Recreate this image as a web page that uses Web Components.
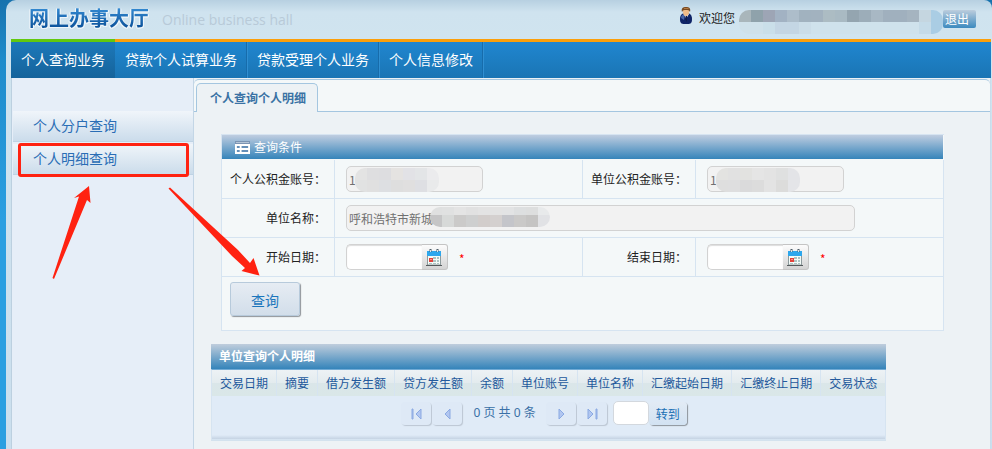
<!DOCTYPE html>
<html lang="zh-CN">
<head>
<meta charset="utf-8">
<title>网上办事大厅</title>
<style>
  body {
    margin: 0;
    font: 12px/16px "Noto Sans CJK SC", sans-serif;
    color: #222;
  }
</style>
</head>
<body>
<app-shell>
  <site-header slot="header"></site-header>
  <main-nav slot="nav"></main-nav>
  <side-menu slot="side"></side-menu>
  <tab-panel label="个人查询个人明细">
    <query-panel></query-panel>
    <detail-grid></detail-grid>
  </tab-panel>
</app-shell>
<guide-arrows></guide-arrows>

<script>
// Base class: renders the template once into an open shadow root
class BaseElement extends HTMLElement {
    constructor() {
        super();
        this.attachShadow({ mode: 'open' });
    }
    connectedCallback() {
        this.shadowRoot.innerHTML = `<style>* { box-sizing: border-box; }</style>` + this.template();
    }
}

// ============================================================================
// Layout
// ============================================================================
class AppShell extends BaseElement {
    template() {
        return `
      <style>
        :host {
          display: block;
          min-height: 100vh;
          box-sizing: border-box;
          padding-left: 6px;
          background: linear-gradient(#1872ad, #1e8ccb 60px, #2a9fe1 220px, #2a9fe1);
        }
        .page {
          display: flex;
          flex-direction: column;
          min-height: 100vh;
          padding: 0 1px 0 5px;
          border-radius: 10px 8px 0 0;
          background: linear-gradient(#b7d0e1, #cfe3ef 12px, #d0e4ef 40px, #cbdfee);
        }
        .body {
          display: grid;
          grid-template-columns: 183px 1fr;
          flex: 1;
          background: #edf2f5;
        }
      </style>
      <div class="page">
        <slot name="header"></slot>
        <slot name="nav"></slot>
        <div class="body">
          <slot name="side"></slot>
          <slot></slot>
        </div>
      </div>
    `;
    }
}

class SiteHeader extends BaseElement {
    template() {
        return `
      <style>
        :host { display: flex; align-items: flex-start; height: 39px; padding: 0 15px 0 18px; box-sizing: border-box; }
        h1 {
          margin: 0;
          font-size: 20px;
          line-height: 36px;
          font-weight: bold;
          background: linear-gradient(#3287cf 25%, #0d549c 75%);
          -webkit-background-clip: text;
          background-clip: text;
          color: transparent;
          filter: drop-shadow(1px 0 0 #eef5f9) drop-shadow(-1px 0 0 #eef5f9) drop-shadow(0 1px 0 #eef5f9);
        }
        .sub { margin: 10px 0 0 13px; font: 14px/20px "Open Sans", sans-serif; color: #b8cad8; }
        .user { display: flex; align-items: center; margin-left: auto; height: 38px; }
        .user svg { margin: 0 6px 8px 0; }
        .user span { padding-bottom: 2px; }
        masked-text { margin: 6px 0 0 4px; }
        button {
          height: 18px;
          padding: 0 7px 0 2px;
          border: 0;
          border-radius: 2px;
          background: linear-gradient(#bccddd, #3c8abf);
          color: #fff;
          font: 12px/18px "Noto Sans CJK SC", sans-serif;
        }
      </style>
      <h1>网上办事大厅</h1>
      <span class="sub">Online business hall</span>
      <div class="user">
        <svg width="14" height="17" viewBox="0 0 14 17">
          <path d="M1 12c0-4 2-6 6-6s6 2 6 6c0 5-2 5-6 5s-6 0-6-5z" fill="#0f2467"/>
          <path d="M2 11c0-3 2-4 4-4l-1 6z" fill="#4765a8"/>
          <path d="M5 7l2 5 3-5z" fill="#e8edf5"/>
          <path d="M7 8l-1 4 2 3V9z" fill="#101c4a"/>
          <ellipse cx="7" cy="5" rx="3" ry="4" fill="#f0bc88"/>
          <path d="M3 5C2 1 4 0 7 0s5 1 4 5c-1-2-2-2-4-2S4 3 3 5z" fill="#7a4a20"/>
          <path d="M5 1h4l1 1H5z" fill="#b47a43"/>
        </svg>
        <span>欢迎您</span>
        <masked-text cells="#a9b6bb #8fa2ab #9da5b5 #a2b2c3 #adbdca #a1b2bf #a2b2bf #acbcc3 #a9bac3 #94a5b0 #9cadb9 #a8b8c4 #a0b0be #a0b0be #a5b4c0 #c5d6e0 #aacde4"
          under="#cfe1ea #cfe1ea #cadfe9 #c4d6e4 #c4d6e4 #cbdde8 #cfe2ec #cfe2ec #cfe2ec #cfe2ec #cfe2ec #cfe2ec #cfe2ec #cfe2ec #cfe2ec #c5dbe8 #aacde4"></masked-text>
        <button type="button">退出</button>
      </div>
    `;
    }
}

class MainNav extends BaseElement {
    template() {
        return `
      <style>
        :host { display: block; background: linear-gradient(#2086d0, #1a75b4); border-top: 3px solid #fb9f0b; }
        nav { display: flex; height: 39px; margin-top: -3px; padding-top: 3px; }
        a {
          padding: 0 9px 0 10px;
          border-right: 1px solid #176cab;
          box-shadow: 1px 0 0 #2f8fd2;
          color: #fff;
          font-size: 14px;
          line-height: 34px;
          text-decoration: none;
        }
        a.active {
          margin-top: -3px;
          padding: 0 10px;
          border-right: 0;
          border-top: 3px solid #62c80e;
          background: linear-gradient(#1d79ba, #15639b);
          box-shadow: none;
        }
      </style>
      <nav>
        <a class="active" href="#">个人查询业务</a>
        <a href="#">贷款个人试算业务</a>
        <a href="#">贷款受理个人业务</a>
        <a href="#">个人信息修改</a>
      </nav>
    `;
    }
}

class SideMenu extends BaseElement {
    template() {
        return `
      <style>
        :host {
          display: block;
          padding: 33px 0 0 1px;
          border-left: 1px solid #bcd0e0;
          border-right: 1px solid #c3d6e6;
          background: #e6eef8;
        }
        a {
          display: block;
          position: relative;
          height: 31px;
          margin-bottom: 2px;
          padding-left: 20px;
          border-bottom: 1px solid #bfd3e4;
          background: linear-gradient(#f0f5fa, #cbdceb);
          color: #2a6db5;
          font-size: 14px;
          line-height: 29px;
          text-decoration: none;
        }
        /* callout frame over the current item */
        a.current::after {
          content: "";
          position: absolute;
          inset: -1px 4px -3px 5px;
          border: 3px solid #ff2211;
          border-radius: 3px;
        }
      </style>
      <a href="#">个人分户查询</a>
      <a href="#" class="current">个人明细查询</a>
    `;
    }
}

class TabPanel extends BaseElement {
    template() {
        return `
      <style>
        :host { display: block; min-width: 0; padding-top: 1px; background: #edf2f5; border-right: 1px solid #c9ddec; }
        .strip {
          display: flex;
          height: 33px;
          padding: 3px 0 0 2px;
          border-top: 1px solid #a4c6e0;
          border-bottom: 1px solid #a4c6e0;
          border-radius: 5px 5px 0 0;
          background: #f4f8f9;
        }
        button {
          height: 29px;
          padding: 0 11px 0 13px;
          border: 1px solid #a4c6e0;
          border-bottom: 0;
          border-radius: 5px 5px 0 0;
          background: #edf2f5;
          color: #3a72a4;
          font: bold 12px/28px "Noto Sans CJK SC", sans-serif;
        }
        .content { padding: 22px 46px 8px 17px; }
      </style>
      <div class="strip"><button type="button">${this.getAttribute('label')}</button></div>
      <div class="content"><slot></slot></div>
    `;
    }
}

// ============================================================================
// Query form
// ============================================================================

// Label cell plus control cell, both laid out by the parent grid
class FormField extends BaseElement {
    template() {
        const date = this.hasAttribute('date');
        const wide = this.hasAttribute('wide');
        const value = this.getAttribute('value') || '';
        return `
      <style>
        :host { display: contents; }
        label, .cell { height: 39px; border-bottom: 1px solid #d6e4f1; }
        label { padding-right: 8px; border-right: 1px solid #d6e4f1; text-align: right; line-height: 38px; }
        .cell { position: relative; display: flex; align-items: center; padding: 0 11px; border-right: 1px solid #d6e4f1; }
        .wide { grid-column: span 3; }
        input {
          width: 137px;
          height: 26px;
          padding: 0 2px;
          border: 1px solid #d2d2d2;
          border-radius: 5px;
          background: #f2f2f2;
          color: #707070;
          font: 12px/24px "Noto Sans CJK SC", sans-serif;
        }
        .wide input { width: 509px; }
        .date input { width: 76px; border-right: 0; border-radius: 5px 0 0 5px; background: #fff; box-shadow: inset 0 1px 1px #ddd; }
        button {
          width: 26px;
          height: 26px;
          padding: 0 0 0 4px;
          border: 1px solid #c4c4c4;
          border-left: 0;
          border-radius: 0 3px 3px 0;
          background: linear-gradient(#fcfcfc, #d4d4d4);
          text-align: left;
        }
        svg { display: block; }
        .star { margin-left: 11px; padding-top: 4px; color: #f00; line-height: 20px; }
        ::slotted(masked-text) { position: absolute; left: 20px; top: 8px; }
        .wide ::slotted(masked-text) { left: 95px; }
      </style>
      <label for="field">${this.getAttribute('label')}：</label>
      <div class="cell ${date ? 'date' : ''} ${wide ? 'wide' : ''}">
        <input id="field" type="text" value="${value}" ${date ? '' : 'readonly'}>
        ${date ? `
        <button type="button" aria-label="${this.getAttribute('label')}">
          <svg width="16" height="17" viewBox="0 0 16 17">
            <path d="M1.500 3h13v13h-13z" fill="#f4fbf8" stroke="#8d9a9c"/>
            <path d="M1 2h14v5H1z" fill="#2da7ed"/>
            <path d="M0 16.500h16" stroke="#545a5c"/>
            <path d="M4.500 0v3M11.500 0v3" stroke="#4c5e6a" stroke-width="2"/>
            <path d="M4.500 1v2M11.500 1v2" stroke="#d5e5ed"/>
            <path d="M7 8h3v2H7zM11 8h2v2h-2zM7 11h3v2H7zM11 11h2v2h-2zM3 14h3v1H3zM7 14h3v1H7zM11 14h2v1h-2z" fill="#adc4c3"/>
            <path d="M3 9h4v4H3z" fill="#e3423a"/>
            <path d="M4 10h2v1H4z" fill="#ff9286"/>
          </svg>
        </button>
        <span class="star">*</span>` : ''}
        <slot></slot>
      </div>
    `;
    }
}

class QueryPanel extends BaseElement {
    template() {
        return `
      <style>
        :host { display: block; margin-left: 10px; border: 1px solid #d6e4f1; border-right: 0; background: #f4f8f9; }
        h2 {
          display: flex;
          align-items: center;
          gap: 4px;
          height: 24px;
          margin: 0 1px 1px 0;
          padding-left: 13px;
          background: linear-gradient(#bfcde0, #3584ba);
          color: #fff;
          font-size: 12px;
          font-weight: normal;
        }
        .fields { display: grid; grid-template-columns: 113px 1fr 113px 1fr; }
        .actions { height: 53px; padding: 5px 8px; border-right: 1px solid #d6e4f1; }
        .actions button {
          width: 70px;
          height: 34px;
          border: 1px solid #b7cadb;
          border-radius: 3px;
          background: linear-gradient(#e6ecf3, #d2deea);
          box-shadow: 1px 1px 1px #8f9499;
          color: #1b76bc;
          font: 14px/32px "Noto Sans CJK SC", sans-serif;
        }
        .long { --first-row: 8px; }
      </style>
      <h2>
        <svg width="15" height="13" viewBox="0 0 16 13" preserveAspectRatio="none">
          <path d="M0 0h16v13H0z" fill="#fff"/>
          <path d="M0 0h16v3H0z" fill="#7a94b4"/>
          <path d="M1 1h14v1H1z" fill="#b3c4d6"/>
          <path d="M2 5h3v2H2zM2 9h3v2H2zM7 5h7v2H7zM7 9h7v2H7z" fill="#648fb8"/>
        </svg>
        查询条件
      </h2>
      <form>
        <div class="fields">
          <form-field label="个人公积金账号" value="1">
            <masked-text cells="#e3e3e3 #dedee0 #dddde0 #e5e3e1 #e2e2e6 #e3e5e7 #ebebed" under="#e1e2e2 #e0e0e0 #dddfe2 #dedede #e0dfdf #dedfe3 #e9eaeb"></masked-text>
          </form-field>
          <form-field label="单位公积金账号" value="1">
            <masked-text cells="#e3e3e1 #e1e1e1 #e2e2e0 #e5e5e5 #e3e3e3 #dfe0e0 #e3e4e7" under="#dedede #dededf #dadadb #dcdcdc #e3e3e3 #dcdcdb #e4e5e8"></masked-text>
          </form-field>
          <form-field label="单位名称" value="呼和浩特市新城" wide>
            <masked-text class="long" cells="#dfe0e0 #e0e1e1 #e4e4e4 #e1e1e1 #e3e3e3 #e3e3e3 #e2e3e4 #dddfe0 #dddede #e8eaeb" under="#c5c5c6 #d7d9d8 #cbcac9 #cecfcf #d2cdcb #d4d0cf #c4c5ca #cac9c8 #c5c4c3 #e1e2e5"></masked-text>
          </form-field>
          <form-field label="开始日期" date></form-field>
          <form-field label="结束日期" date></form-field>
        </div>
        <div class="actions"><button type="button">查询</button></div>
      </form>
    `;
    }
}

// ============================================================================
// Result grid
// ============================================================================
class DetailGrid extends BaseElement {
    template() {
        const columns = ['交易日期', '摘要', '借方发生额', '贷方发生额', '余额', '单位账号', '单位名称', '汇缴起始日期', '汇缴终止日期', '交易状态'];
        return `
      <style>
        :host { display: block; width: fit-content; margin-top: 13px; border-bottom: 1px solid #d3e2ee; }
        h2 {
          height: 25px;
          margin: 0;
          padding-left: 8px;
          background: linear-gradient(#bfcddc, #3584ba);
          color: #fff;
          font-size: 12px;
          line-height: 24px;
        }
        table { border-collapse: separate; border-spacing: 0; border-left: 1px solid #d6e4f1; border-top: 1px solid #72abd5; }
        th {
          height: 26px;
          padding: 0 8px;
          border-right: 1px solid #d6e4f1;
          background: linear-gradient(#edf2f5, #e3ebee 50%, #dae6e9 50%, #dae7e8);
          color: #23599c;
          font-weight: normal;
          line-height: 24px;
          white-space: nowrap;
        }
      </style>
      <h2>单位查询个人明细</h2>
      <table>
        <thead><tr>${columns.map((name) => `<th>${name}</th>`).join('')}</tr></thead>
      </table>
      <pager-bar></pager-bar>
    `;
    }
}

class PagerBar extends BaseElement {
    button(label, path) {
        return `
      <button type="button" aria-label="${label}">
        <svg width="11" height="12" viewBox="0 0 11 12"><path d="${path}" fill="#b1c6f0" stroke="#8aa9e2"/></svg>
      </button>`;
    }
    template() {
        return `
      <style>
        :host {
          display: flex;
          justify-content: center;
          height: 44px;
          box-sizing: border-box;
          padding: 5px 8px 0 0;
          border: 1px solid #d6e4f1;
          border-top: 0;
          background: linear-gradient(#e0ebf7 39px, #c5d3e3);
          color: #3a70a6;
        }
        button {
          width: 30px;
          height: 23px;
          margin: 1px 1px 0 0;
          padding: 0 0 0 1px;
          border: 0;
          border-radius: 4px;
          background: #dee9f6;
          box-shadow: 1px 1px 1px #bcc6d2;
        }
        svg { display: block; margin: 0 auto; }
        .count { padding: 0 10px; font: 12px/24px "Noto Sans", "Noto Sans CJK SC", sans-serif; white-space: pre; }
        input {
          width: 36px;
          height: 24px;
          margin-left: 5px;
          border: 1px solid #d3d8de;
          border-radius: 5px;
          background: #fff;
        }
        .go {
          width: 38px;
          padding: 0;
          background: linear-gradient(#e2ebf5, #d2e2f2);
          box-shadow: 1px 1px 1px #8d949b;
          color: #1b70b4;
          font: 12px/22px "Noto Sans CJK SC", sans-serif;
        }
      </style>
      ${this.button('首页', 'M1 1h1v10H1zM10 1v10L5 6z')}
      ${this.button('上一页', 'M8 1v10L3 6z')}
      <span class="count">0 页 共 0 条</span>
      ${this.button('下一页', 'M3 1v10l5-5z')}
      ${this.button('末页', 'M1 1v10l5-5zM9 1h1v10H9z')}
      <input type="text" aria-label="页码">
      <button type="button" class="go">转到</button>
    `;
    }
}

// ============================================================================
// Overlays
// ============================================================================

// Two rows of mosaic blocks that hide private text
class MaskedText extends BaseElement {
    row(name) {
        return this.getAttribute(name).split(' ').map((c) => `<i style="background:${c}"></i>`).join('');
    }
    template() {
        return `
      <style>
        :host { display: block; border-radius: 10px; overflow: hidden; }
        div { display: flex; height: 12px; }
        div:first-of-type { height: var(--first-row, 12px); }
        i { width: 12px; }
      </style>
      <div>${this.row('cells')}</div>
      <div>${this.row('under')}</div>
    `;
    }
}

class GuideArrows extends BaseElement {
    template() {
        return `
      <style>
        :host { position: absolute; left: 0; top: 0; pointer-events: none; }
        svg { display: block; }
      </style>
      <svg width="300" height="300" viewBox="0 0 300 300" fill="#ff2211">
        <path d="M52.500 278L79 196.500 74 198 89 186 90.500 203 87 200 54 279z"/>
        <path d="M168.500 188.500L232 256 245 268 241.500 271 259.500 275.500 253.500 258 250 263 238 250 170 187.500z"/>
      </svg>
    `;
    }
}

customElements.define('app-shell', AppShell);
customElements.define('site-header', SiteHeader);
customElements.define('main-nav', MainNav);
customElements.define('side-menu', SideMenu);
customElements.define('tab-panel', TabPanel);
customElements.define('form-field', FormField);
customElements.define('query-panel', QueryPanel);
customElements.define('detail-grid', DetailGrid);
customElements.define('pager-bar', PagerBar);
customElements.define('masked-text', MaskedText);
customElements.define('guide-arrows', GuideArrows);
</script>
</body>
</html>
